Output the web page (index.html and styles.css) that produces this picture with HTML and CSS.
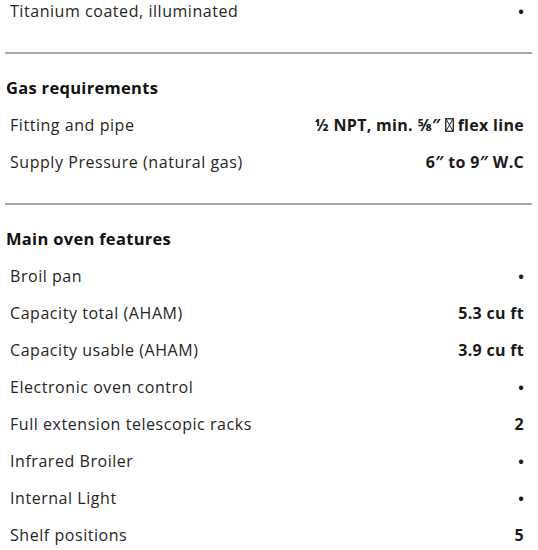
FILE: index.html
```html
<!DOCTYPE html>
<html>
<head>
<meta charset="utf-8">
<link rel="stylesheet" href="styles.css">
</head>
<body>
<div class="specs">
  <section class="group first">
    <div class="row"><span class="label">Titanium coated, illuminated</span><span class="value dot">•</span></div>
  </section>
  <hr class="divider">
  <section class="group">
    <h3 class="heading">Gas requirements</h3>
    <div class="row"><span class="label">Fitting and pipe</span><span class="value">½ NPT, min. ⅝″ <svg class="tofu" width="9" height="14" viewBox="0 0 9 14"><rect x="0.75" y="0.75" width="7.5" height="12.5" fill="none" stroke="#222" stroke-width="1.3"/><path d="M1 1L8 13M8 1L1 13" stroke="#222" stroke-width="1"/></svg> flex line</span></div>
    <div class="row"><span class="label">Supply Pressure (natural gas)</span><span class="value">6″ to 9″ W.C</span></div>
  </section>
  <hr class="divider">
  <section class="group">
    <h3 class="heading">Main oven features</h3>
    <div class="row"><span class="label">Broil pan</span><span class="value dot">•</span></div>
    <div class="row"><span class="label">Capacity total (AHAM)</span><span class="value">5.3 cu ft</span></div>
    <div class="row"><span class="label">Capacity usable (AHAM)</span><span class="value">3.9 cu ft</span></div>
    <div class="row"><span class="label">Electronic oven control</span><span class="value dot">•</span></div>
    <div class="row"><span class="label">Full extension telescopic racks</span><span class="value">2</span></div>
    <div class="row"><span class="label">Infrared Broiler</span><span class="value dot">•</span></div>
    <div class="row"><span class="label">Internal Light</span><span class="value dot">•</span></div>
    <div class="row"><span class="label">Shelf positions</span><span class="value">5</span></div>
  </section>
</div>
</body>
</html>
```
FILE: styles.css
```css
html, body {
  margin: 0;
  padding: 0;
  background: #ffffff;
}
body {
  font-family: "Open Sans", "Liberation Sans", sans-serif;
  color: #1a1a1a;
}
.specs {
  width: 538px;
  margin-top: -8px;
  display: flex;
  flex-direction: column;
}
.group {
  display: flex;
  flex-direction: column;
  padding: 0 14px 0 10px;
}
.row {
  height: 37px;
  display: flex;
  align-items: center;
  justify-content: space-between;
  font-size: 16px;
  letter-spacing: 0.55px;
}
.label {
  color: #262626;
}
.value {
  font-weight: 700;
  color: #1a1a1a;
  display: flex;
  align-items: center;
  gap: 4px;
  letter-spacing: 0.3px;
}
.value.dot {
  font-size: 15px;
  letter-spacing: 0;
  padding-right: 0;
}
.tofu {
  display: block;
}
.heading {
  margin: 0 0 0 -4px;
  padding: 19px 0 3px;
  line-height: 30px;
  font-size: 16.5px;
  font-weight: 700;
  letter-spacing: 0.3px;
  color: #111;
}
.divider {
  margin: 23px 6px 0 5px;
  border: 0;
  border-top: 2px solid #a9a9a9;
  height: 0;
}
```
